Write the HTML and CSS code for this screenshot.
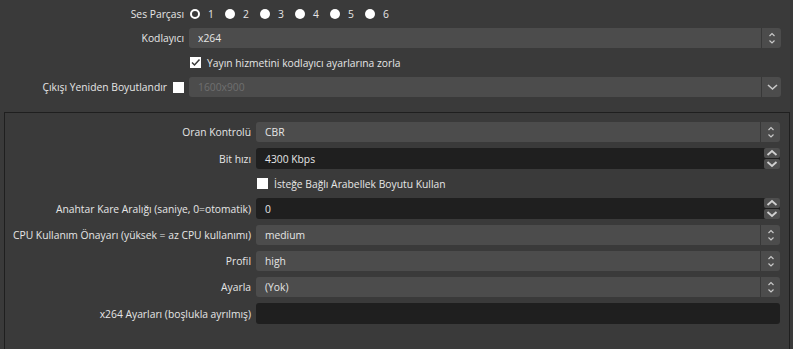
FILE: index.html
```html
<!DOCTYPE html>
<html lang="tr">

<head>
    <meta charset="UTF-8">
    <meta name="viewport" content="width=device-width, initial-scale=1.0">
    <title>Çıkış Ayarları</title>
    <link rel="stylesheet" href="styles.css">
</head>

<body>
    <!-- Üst bölüm -->
    <div class="form top">
        <div class="label">Ses Parçası</div>
        <div class="radios">
            <span class="radio-item"><span class="radio on"></span>1</span>
            <span class="radio-item"><span class="radio"></span>2</span>
            <span class="radio-item"><span class="radio"></span>3</span>
            <span class="radio-item"><span class="radio"></span>4</span>
            <span class="radio-item"><span class="radio"></span>5</span>
            <span class="radio-item"><span class="radio"></span>6</span>
        </div>

        <div class="label">Kodlayıcı</div>
        <div class="combo">
            <span class="value">x264</span>
            <span class="combo-btn">
                <svg width="20" height="20" viewBox="0 0 20 20"><path d="M7.5 8 L10 5.5 L12.5 8 M7.5 12.5 L10 15 L12.5 12.5" /></svg>
            </span>
        </div>

        <div></div>
        <div class="check"><span class="box checked"><svg width="11" height="11" viewBox="0 0 11 11"><path d="M2 5.5 L4.5 8 L9.5 2.5" /></svg></span>Yayın hizmetini kodlayıcı ayarlarına zorla</div>

        <div class="label">Çıkışı Yeniden Boyutlandır <span class="box"></span></div>
        <div class="combo disabled">
            <span class="value">1600x900</span>
            <span class="combo-btn">
                <svg width="20" height="20" viewBox="0 0 20 20"><path d="M6 8 L10.5 12 L15 8" /></svg>
            </span>
        </div>
    </div>

    <!-- Kodlayıcı ayarları -->
    <div class="group">
        <div class="form">
            <div class="label">Oran Kontrolü</div>
            <div class="combo">
                <span class="value">CBR</span>
                <span class="combo-btn"><svg width="20" height="20" viewBox="0 0 20 20"><path d="M7.5 8 L10 5.5 L12.5 8 M7.5 12.5 L10 15 L12.5 12.5" /></svg></span>
            </div>

            <div class="label">Bit hızı</div>
            <div class="spin">
                <span class="value">4300 Kbps</span>
                <span class="spin-btns">
                    <span class="spin-btn"><svg width="16" height="10" viewBox="0 0 16 10"><path d="M3.5 7 L8 3 L12.5 7" /></svg></span>
                    <span class="spin-btn"><svg width="16" height="10" viewBox="0 0 16 10"><path d="M3.5 3 L8 7 L12.5 3" /></svg></span>
                </span>
            </div>

            <div></div>
            <div class="check"><span class="box"></span>İsteğe Bağlı Arabellek Boyutu Kullan</div>

            <div class="label">Anahtar Kare Aralığı (saniye, 0=otomatik)</div>
            <div class="spin">
                <span class="value">0</span>
                <span class="spin-btns">
                    <span class="spin-btn"><svg width="16" height="10" viewBox="0 0 16 10"><path d="M3.5 7 L8 3 L12.5 7" /></svg></span>
                    <span class="spin-btn"><svg width="16" height="10" viewBox="0 0 16 10"><path d="M3.5 3 L8 7 L12.5 3" /></svg></span>
                </span>
            </div>

            <div class="label">CPU Kullanım Önayarı (yüksek = az CPU kullanımı)</div>
            <div class="combo">
                <span class="value">medium</span>
                <span class="combo-btn"><svg width="20" height="20" viewBox="0 0 20 20"><path d="M7.5 8 L10 5.5 L12.5 8 M7.5 12.5 L10 15 L12.5 12.5" /></svg></span>
            </div>

            <div class="label">Profil</div>
            <div class="combo">
                <span class="value">high</span>
                <span class="combo-btn"><svg width="20" height="20" viewBox="0 0 20 20"><path d="M7.5 8 L10 5.5 L12.5 8 M7.5 12.5 L10 15 L12.5 12.5" /></svg></span>
            </div>

            <div class="label">Ayarla</div>
            <div class="combo">
                <span class="value">(Yok)</span>
                <span class="combo-btn"><svg width="20" height="20" viewBox="0 0 20 20"><path d="M7.5 8 L10 5.5 L12.5 8 M7.5 12.5 L10 15 L12.5 12.5" /></svg></span>
            </div>

            <div class="label">x264 Ayarları (boşlukla ayrılmış)</div>
            <div class="line-edit"></div>
        </div>
    </div>
</body>

</html>
```

FILE: styles.css
```css
body {
    margin: 0;
    padding: 5px 0 0 0;
    background-color: #3a3a3a;
    color: #e6e6e6;
    font-family: "Open Sans", "Noto Sans", sans-serif;
    font-size: 10.3px;
    overflow: hidden;
}

.form {
    display: grid;
    grid-template-columns: 184px 1fr;
    column-gap: 5px;
    row-gap: 6px;
    align-items: center;
}

.top {
    padding-right: 12px;
}

.label {
    text-align: right;
    white-space: nowrap;
    display: flex;
    justify-content: flex-end;
    align-items: center;
    gap: 6px;
}

.radios {
    display: flex;
    height: 17px;
    align-items: center;
    padding-left: 1px;
}

.radio-item {
    display: flex;
    align-items: center;
    width: 35px;
}

.radio {
    width: 10px;
    height: 10px;
    border-radius: 50%;
    background-color: #ffffff;
    margin-right: 8px;
    box-sizing: border-box;
}

.radio.on {
    background-color: #3a3a3a;
    border: 2px solid #ffffff;
}

.combo {
    display: flex;
    height: 20px;
    background-color: #4c4c4c;
    border-radius: 3px;
    align-items: stretch;
}

.combo .value,
.spin .value {
    flex: 1;
    display: flex;
    align-items: center;
    padding-left: 9px;
}

.combo.disabled .value {
    color: #6f6f6f;
}

.combo-btn {
    width: 19px;
    border-left: 1px solid #383838;
}

.combo-btn svg path {
    fill: none;
    stroke: #c8c8c8;
    stroke-width: 1.2;
}

.combo.disabled .combo-btn svg path {
    stroke-width: 1.6;
}

.check {
    display: flex;
    align-items: center;
    height: 17px;
    padding-left: 1px;
}

.box {
    width: 11px;
    height: 11px;
    background-color: #ffffff;
    display: inline-block;
    flex: none;
}

.check .box {
    margin-right: 6px;
}

.box svg {
    display: block;
}

.box svg path {
    fill: none;
    stroke: #3a3a3a;
    stroke-width: 1.5;
}

.group {
    margin: 15px 3px 0 4px;
    border: 1px solid #1f1f1f;
    border-bottom: none;
    padding: 9px 9px 40px 0;
}

.group .form {
    grid-template-columns: 246px 1fr;
}

.spin {
    display: flex;
    height: 21px;
    background-color: #1f1f1f;
    border-radius: 3px;
}

.spin-btns {
    display: flex;
    flex-direction: column;
    gap: 1px;
}

.spin-btn {
    width: 16px;
    height: 10px;
    background-color: #4e4e4e;
    border-radius: 2px;
}

.spin-btn svg {
    display: block;
}

.spin-btn svg path {
    fill: none;
    stroke: #d0d0d0;
    stroke-width: 1.8;
}

.line-edit {
    height: 21px;
    background-color: #1f1f1f;
    border-radius: 3px;
}
```
